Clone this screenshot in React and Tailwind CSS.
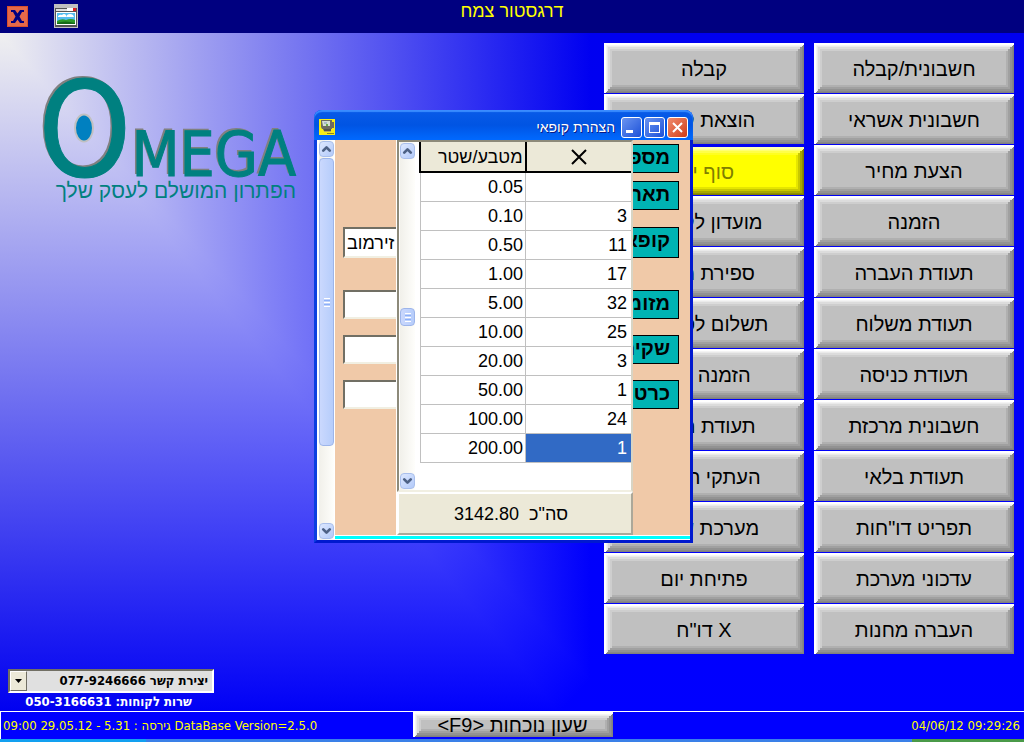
import { ChevronDown, ChevronUp } from "lucide-react";

const rightMenu = [
  "חשבונית/קבלה",
  "חשבונית אשראי",
  "הצעת מחיר",
  "הזמנה",
  "תעודת העברה",
  "תעודת משלוח",
  "תעודת כניסה",
  "חשבונית מרכזת",
  "תעודת בלאי",
  'תפריט דו"חות',
  "עדכוני מערכת",
  "העברה מחנות",
];

const leftMenu = [
  "קבלה",
  "הוצאת קופה",
  "סוף יום",
  "מועדון לקוחות",
  "ספירת מלאי",
  "תשלום לספקים",
  "הזמנה רכש",
  "תעודת החזר",
  "העתקי הזמנה",
  "מערכת שעות",
  "פתיחת יום",
  'דו"ח X',
];

const coins = [
  { value: "0.05", count: "" },
  { value: "0.10", count: "3" },
  { value: "0.50", count: "11" },
  { value: "1.00", count: "17" },
  { value: "5.00", count: "32" },
  { value: "10.00", count: "25" },
  { value: "20.00", count: "3" },
  { value: "50.00", count: "1" },
  { value: "100.00", count: "24" },
  { value: "200.00", count: "1", selected: true },
];

const fields = [
  { id: "number", label: "מספר", row: "h-[29px]" },
  { id: "date", label: "תאריך", row: "mt-2 h-[29px]" },
  { id: "cashier", label: "קופאי", row: "mt-[17px] h-[31px]", value: "זירמוב", input: true },
  { id: "cash", label: "מזומן", row: "mt-8 h-[29px]", input: true },
  { id: "checks", label: "שקים", row: "mt-4 h-[29px]", input: true },
  { id: "cards", label: "כרטיס", row: "mt-4 h-[29px]", input: true },
];

const greyBevel =
  "bg-[#c0c0c0] shadow-[inset_2px_2px_0_#ffffff,inset_-1px_-1px_0_#808080,inset_3px_3px_0_#f4f4f4,inset_-2px_-2px_0_#888888,inset_4px_4px_0_#eaeaea,inset_-4px_-4px_0_#929292,inset_6px_6px_0_#dcdcdc,inset_-6px_-6px_0_#a0a0a0,inset_8px_8px_0_#cecece,inset_-8px_-8px_0_#b0b0b0]";
const yellowBevel =
  "bg-[#ffff00] shadow-[inset_2px_2px_0_#ffffb0,inset_-1px_-1px_0_#808000,inset_3px_3px_0_#ffff90,inset_-2px_-2px_0_#909000,inset_4px_4px_0_#ffff70,inset_-4px_-4px_0_#a8a800,inset_6px_6px_0_#ffff48,inset_-6px_-6px_0_#c8c800,inset_8px_8px_0_#ffff20,inset_-8px_-8px_0_#e6e600]";

function MenuButton({ text, active }) {
  return (
    <button
      className={`w-full pt-0.5 font-['Liberation_Sans',sans-serif] text-xl ${
        active
          ? `mt-0.5 h-12 text-[#808000] ${yellowBevel}`
          : `h-[50px] text-black ${greyBevel}`
      }`}
    >
      {text}
    </button>
  );
}

function MenuColumn({ items, activeIndex }) {
  return (
    <div className="flex w-[200px] flex-col gap-px">
      {items.map((text, idx) => (
        <MenuButton key={text} text={text} active={idx === activeIndex} />
      ))}
    </div>
  );
}

function ScrollButton({ label, children }) {
  return (
    <button
      type="button"
      aria-label={label}
      className="flex h-4 w-full shrink-0 items-center justify-center rounded-sm border border-[#a9bfec] bg-linear-to-br from-[#dde8ff] to-[#b3caf9] text-[#4d6185]"
    >
      {children}
    </button>
  );
}

function Scrollbar({ before, thumb }) {
  return (
    <div className="flex w-[17px] shrink-0 flex-col border-x border-white bg-linear-to-r from-[#f1f0ea] to-[#fefefb] py-px">
      <ScrollButton label="למעלה">
        <ChevronUp size={14} strokeWidth={5} />
      </ScrollButton>
      <div className={before} />
      <div
        className={`flex w-full flex-col items-center justify-center gap-px rounded-sm border border-[#9db5ea] bg-linear-to-r from-[#cad8fd] to-[#b6cdfb] ${thumb}`}
      >
        <span className="h-px w-1.5 bg-white" />
        <span className="h-px w-1.5 bg-[#8cb0f8]" />
        <span className="h-px w-1.5 bg-white" />
        <span className="h-px w-1.5 bg-[#8cb0f8]" />
        <span className="h-px w-1.5 bg-white" />
      </div>
      <div className="flex-1" />
      <ScrollButton label="למטה">
        <ChevronDown size={14} strokeWidth={5} />
      </ScrollButton>
    </div>
  );
}

function Logo() {
  return (
    <div className="w-[258px] text-[#008080]">
      <div className="flex h-[102px] items-baseline font-['DejaVu_Sans_Condensed','DejaVu_Sans',sans-serif] [-webkit-text-stroke:1px_#008080] [text-shadow:-2px_-2px_0_#808080]">
        <div className="relative">
          <span className="text-[132px] leading-[106px]">O</span>
          <svg className="absolute left-[36px] top-[36px]" width="20" height="30" viewBox="0 0 20 30">
            <ellipse cx="10" cy="15" rx="9" ry="13.5" fill="#0080c0" stroke="#c0c0c0" strokeWidth="2" />
          </svg>
        </div>
        <span className="text-[62px] leading-none">MEGA</span>
      </div>
      <p
        dir="rtl"
        className="whitespace-nowrap font-['Liberation_Sans',sans-serif] text-[21px] leading-6"
      >
        הפתרון המושלם לעסק שלך
      </p>
    </div>
  );
}

function CoinPanel() {
  return (
    <div className="z-10 col-start-1 row-start-1 ml-[61px] flex w-[237px] flex-col border-l border-white font-['Liberation_Sans',sans-serif] text-lg">
      <div className="flex h-[352px] border-2 border-b-[#f1efe2] border-l-[#8d8a7a] border-r-[#d8d4c4] border-t-[#8d8a7a] bg-white">
        <Scrollbar before="h-[149px]" thumb="h-[18px]" />
        <div className="flex-1 pl-[3px]">
          <table className="w-full table-fixed border-collapse text-right">
            <thead>
              <tr className="h-[30px] bg-[#ece9d8]">
                <th className="border-2 border-t-0 border-black border-b-black px-0.5 py-0 text-right font-normal">
                  מטבע/שטר
                </th>
                <th className="border-b-2 border-black p-0 font-normal">
                  <svg className="mx-auto" width="16" height="16" viewBox="0 0 16 16" aria-label="X">
                    <path d="M1 1l14 14M15 1L1 15" stroke="#000" strokeWidth="2" />
                  </svg>
                </th>
              </tr>
            </thead>
            <tbody>
              {coins.map((coin) => (
                <tr key={coin.value} className="h-[29px]">
                  <td className="border border-[#c0c0c0] px-0.5 py-0 leading-7">{coin.value}</td>
                  <td
                    className={`border border-r-0 border-[#c0c0c0] px-1 py-0 leading-7 ${
                      coin.selected ? "bg-[#316ac5] text-white" : ""
                    }`}
                  >
                    {coin.count}
                  </td>
                </tr>
              ))}
            </tbody>
          </table>
        </div>
      </div>
      <div className="flex h-[43px] items-center justify-center gap-2.5 border-2 border-b-[#aca899] border-l-white border-r-[#aca899] border-t-white bg-[#ece9d8] pr-2">
        <span>3142.80</span>
        <span>סה"כ</span>
      </div>
    </div>
  );
}

function CashierForm() {
  return (
    <form className="col-start-1 row-start-1 flex flex-col bg-[#f0c9a8] pl-2 pr-[11px] pt-1 font-['Liberation_Sans',sans-serif]">
      {fields.map((field) => (
        <div key={field.id} dir="rtl" className={`flex items-stretch justify-between ${field.row}`}>
          <label
            htmlFor={field.id}
            className="w-12 overflow-hidden whitespace-nowrap border border-black bg-[#00b3b3] px-2 text-xl leading-6 font-bold"
          >
            {field.label}
          </label>
          {field.input && (
            <input
              id={field.id}
              defaultValue={field.value}
              className="w-14 border-2 border-b-[#f1efe2] border-l-[#716f64] border-r-[#f1efe2] border-t-[#716f64] bg-white px-0.5 text-left text-lg"
            />
          )}
        </div>
      ))}
    </form>
  );
}

function Dialog() {
  const control =
    "flex h-[21px] w-[21px] items-center justify-center rounded-[3px] border border-white";

  return (
    <section
      aria-label="הצהרת קופאי"
      className="absolute left-[314px] top-[110px] w-[379px] rounded-t-lg border-x-[3px] border-b-[3px] border-[#0019cf] border-l-[#0b3fe0] bg-[#0831d9]"
    >
      <header className="-mx-[3px] flex h-[30px] items-center justify-between rounded-t-lg bg-linear-to-b from-[#0a5be8] via-[#0054e3] to-[#0069ff] px-[5px] pt-1 shadow-[inset_0_2px_1px_#3a8cff]">
        <svg width="16" height="16" viewBox="0 0 16 16">
          <rect width="16" height="16" fill="#f5ec18" />
          <path d="M2 1h11v2h2v6h-2v1H3L2 8z" fill="#6e6b60" />
          <path d="M3 2h8v5H4z" fill="#d5dfd2" />
          <path d="M5 3h3v2H5z" fill="#a9b8c4" />
          <path d="M7 5h2v2H7z" fill="#6aa84a" />
          <path d="M4 10h8v2H5z" fill="#55534c" />
          <path d="M5 12h7v1H5z" fill="#b5ad60" />
          <path d="M8 14h7v1H8z" fill="#8a8420" />
        </svg>
        <div className="flex items-center gap-0.5">
          <h1 className="pr-1 font-['Liberation_Sans',sans-serif] text-sm text-white [text-shadow:1px_1px_0_#0a1883]">
            הצהרת קופאי
          </h1>
          <button aria-label="מזעור" className={`bg-linear-to-br from-[#6a93f0] to-[#1c4fd8] ${control}`}>
            <svg width="13" height="13" viewBox="0 0 13 13">
              <path d="M1 9h7v3H1z" fill="#fff" />
            </svg>
          </button>
          <button aria-label="הגדלה" className={`bg-linear-to-br from-[#6a93f0] to-[#1c4fd8] ${control}`}>
            <svg width="13" height="13" viewBox="0 0 13 13">
              <path d="M1 1h11v11H1zM2 4v7h9V4z" fill="#fff" fillRule="evenodd" />
            </svg>
          </button>
          <button aria-label="סגירה" className={`bg-linear-to-br from-[#ef8a6c] to-[#d03a10] ${control}`}>
            <svg width="13" height="13" viewBox="0 0 13 13">
              <path d="M2 2l9 9M11 2l-9 9" stroke="#fff" strokeWidth="2" />
            </svg>
          </button>
        </div>
      </header>
      <div className="flex border-l border-white">
        <Scrollbar before="h-px" thumb="h-[288px]" />
        <div className="flex-1">
          <div className="grid">
            <CashierForm />
            <CoinPanel />
          </div>
          <div className="h-[5px] border-y border-white bg-[#00ffff]" />
        </div>
      </div>
    </section>
  );
}

export default function App() {
  return (
    <div className="relative flex min-h-screen flex-col bg-[#0000ff] font-['DejaVu_Sans_Condensed','DejaVu_Sans',sans-serif]">
      <header className="grid h-[33px] grid-cols-3 items-start bg-[#000080]">
        <div className="flex items-center gap-[26px] pl-[7px] pt-1">
          <button
            aria-label="יציאה"
            className="flex h-[21px] w-[21px] items-center justify-center border border-[#d8502c] bg-[#e4694a]"
          >
            <svg width="15" height="15" viewBox="0 0 15 15">
              <path
                d="M1 1h4l2.500 3.500L10 1h4v2h-2L9.500 7.500 12 12h2v2h-4l-2.500-3.500L5 14H1v-2h2l2.500-4.500L3 3H1z"
                fill="#000080"
              />
            </svg>
          </button>
          <button aria-label="תמונה" className="h-6 w-6">
            <svg width="24" height="24" viewBox="0 0 24 24">
              <rect width="24" height="24" fill="#c0c0c0" />
              <rect x="1" y="4" width="22" height="19" fill="#555" />
              <rect x="2" y="5" width="20" height="2" fill="#e0e0e0" />
              <rect x="13" y="4" width="6" height="3" fill="#fff" />
              <rect x="19" y="4" width="3" height="3" fill="#e02020" />
              <rect x="2" y="8" width="20" height="13" fill="#fff" />
              <rect x="3" y="9" width="18" height="11" fill="#55bdf0" />
              <path d="M4 12q2-2 4-1 2-2 4 0l1 2H4zM13 11q3-2 6 0l1 2h-7z" fill="#fff" />
              <path d="M3 17q5-3 9-1 5-2 9 0v4H3z" fill="#2d9a2a" />
              <path d="M3 19q8-3 18 0v1H3z" fill="#156a18" />
            </svg>
          </button>
        </div>
        <p className="text-center font-['Liberation_Sans',sans-serif] text-lg leading-[22px] text-[#ffff00]">
          דרגסטור צמח
        </p>
      </header>

      <main className="flex flex-1 justify-between bg-[radial-gradient(830px_920px_at_0_0,#f0f0f0,#0000ff),linear-gradient(to_right,#f0f0f0,#0000ff_590px),linear-gradient(to_bottom,#f0f0f0,#0000ff_680px)] bg-blend-darken">
        <div className="flex flex-col justify-between pl-2 pt-11">
          <div className="pl-[30px]">
            <Logo />
          </div>
          <div className="w-[206px] text-[13px] font-bold">
            <div className="flex h-6 border-2 border-b-white border-l-[#716f64] border-r-white border-t-[#716f64] bg-[#e0e0e0]">
              <span className="flex w-[17px] shrink-0 items-center justify-center border border-b-[#716f64] border-l-white border-r-[#716f64] border-t-white bg-[#ece9d8]">
                <svg width="7" height="4" viewBox="0 0 7 4">
                  <path d="M0 0h7L3.500 4z" fill="#000" />
                </svg>
              </span>
              <select
                dir="rtl"
                aria-label="יצירת קשר"
                className="min-w-0 flex-1 appearance-none bg-[#e0e0e0] px-1 text-black"
              >
                <option>יצירת קשר 077-9246666</option>
              </select>
            </div>
            <p dir="rtl" className="pr-[22px] leading-[18px] text-white">
              שרות לקוחות: 050-3166631
            </p>
          </div>
        </div>
        <div className="flex gap-2.5 pb-14 pr-2.5 pt-2.5">
          <MenuColumn items={leftMenu} activeIndex={2} />
          <MenuColumn items={rightMenu} />
        </div>
      </main>

      <footer>
        <div className="grid h-[28px] grid-cols-[1fr_200px_1fr] border-l border-t border-white bg-[#0000ff] text-[13px] text-[#ffff00]">
          <p className="self-center whitespace-nowrap pl-0.5">
            09:00 29.05.12 - 5.31 : גירסה DataBase Version=2.5.0
          </p>
          <button
            className={`h-[25px] font-['Liberation_Sans',sans-serif] text-xl leading-6 text-black ${greyBevel}`}
          >
            &lt;F9&gt; שעון נוכחות
          </button>
          <p className="self-center pr-1 text-right">04/06/12 09:29:26</p>
        </div>
        <div className="flex h-[3px]">
          <div className="w-[146px] bg-[#12a0f0]" />
          <div className="flex-1 bg-[#3a80e8]" />
          <div className="w-[112px] bg-[#4a9a48]" />
        </div>
      </footer>

      <Dialog />
    </div>
  );
}
